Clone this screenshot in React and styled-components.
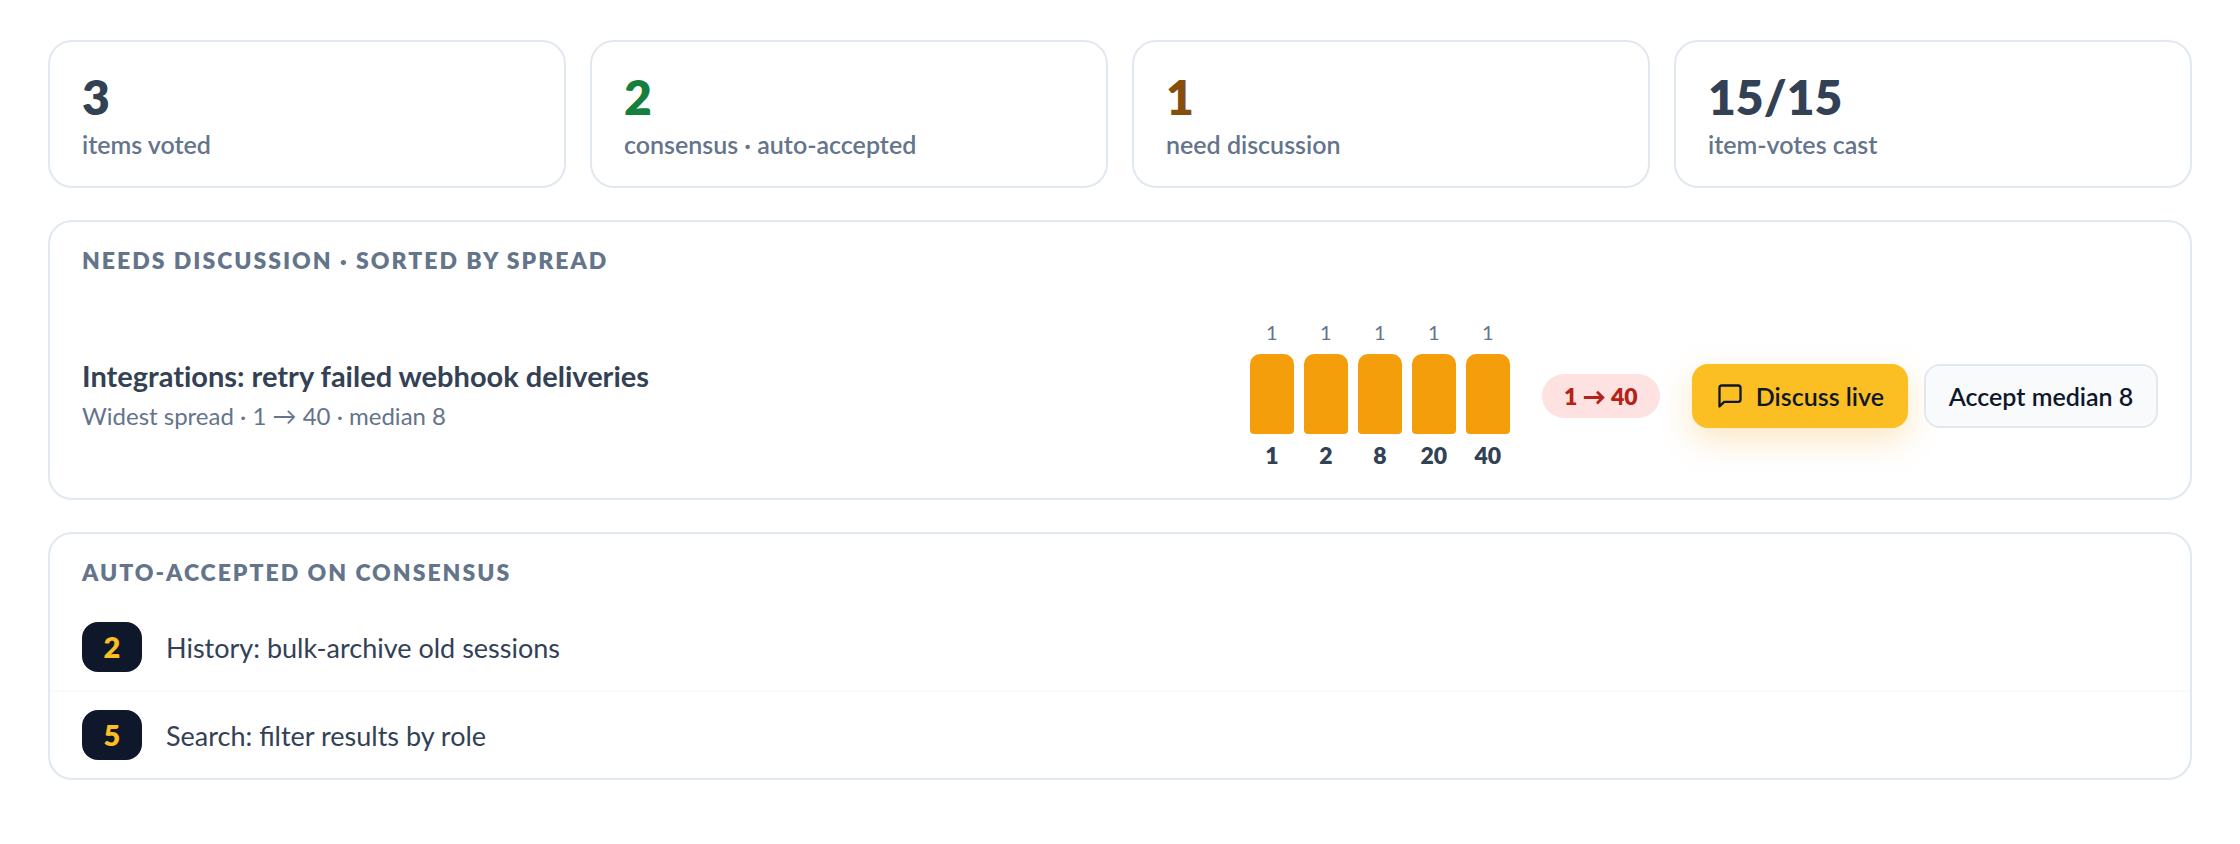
import styled, { createGlobalStyle } from "styled-components"

const stats = [
    { value: "3", label: "items voted", color: "#334155" },
    { value: "2", label: "consensus · auto-accepted", color: "#15803d" },
    { value: "1", label: "need discussion", color: "#854d0e" },
    { value: "15/15", label: "item-votes cast", color: "#334155" },
]

const votes = [
    { estimate: 1, count: 1 },
    { estimate: 2, count: 1 },
    { estimate: 8, count: 1 },
    { estimate: 20, count: 1 },
    { estimate: 40, count: 1 },
]

const accepted = [
    { estimate: 2, title: "History: bulk-archive old sessions" },
    { estimate: 5, title: "Search: filter results by role" },
]

const maxCount = Math.max(...votes.map((vote) => vote.count))

export default function App() {
    return (
        <>
            <GlobalStyle />
            <PageContainer>
                <StatGrid>
                    {stats.map((stat) => (
                        <StatCard key={stat.label}>
                            <StatValue $color={stat.color}>{stat.value}</StatValue>
                            <StatLabel>{stat.label}</StatLabel>
                        </StatCard>
                    ))}
                </StatGrid>

                <Panel>
                    <PanelTitle>Needs discussion · sorted by spread</PanelTitle>
                    <DiscussionRow>
                        <ItemText>
                            <ItemTitle>Integrations: retry failed webhook deliveries</ItemTitle>
                            <ItemInfo>Widest spread · 1 → 40 · median 8</ItemInfo>
                        </ItemText>
                        <Chart>
                            {votes.map((vote) => (
                                <ChartColumn key={vote.estimate}>
                                    <VoteCount>{vote.count}</VoteCount>
                                    <Bar style={{ height: (vote.count / maxCount) * 80 }} />
                                    <Estimate>{vote.estimate}</Estimate>
                                </ChartColumn>
                            ))}
                        </Chart>
                        <SpreadPill>1 → 40</SpreadPill>
                        <Actions>
                            <DiscussButton type="button">
                                <ChatIcon />
                                Discuss live
                            </DiscussButton>
                            <AcceptButton type="button">Accept median 8</AcceptButton>
                        </Actions>
                    </DiscussionRow>
                </Panel>

                <Panel>
                    <PanelTitle>Auto-accepted on consensus</PanelTitle>
                    <AcceptedList>
                        {accepted.map((item) => (
                            <AcceptedRow key={item.title}>
                                <EstimateBadge>{item.estimate}</EstimateBadge>
                                {item.title}
                            </AcceptedRow>
                        ))}
                    </AcceptedList>
                </Panel>
            </PageContainer>
        </>
    )
}

function ChatIcon() {
    return (
        <svg
            width="28"
            height="28"
            viewBox="0 0 24 24"
            fill="none"
            stroke="currentColor"
            strokeWidth="2"
            strokeLinecap="round"
            strokeLinejoin="round"
            aria-hidden="true"
        >
            <path d="M21 15a2 2 0 0 1-2 2H7l-4 4V5a2 2 0 0 1 2-2h14a2 2 0 0 1 2 2z" />
        </svg>
    )
}

const GlobalStyle = createGlobalStyle`
    * {
        box-sizing: border-box;
    }

    body {
        margin: 0;
        background-color: #FFFFFF;
        color: #334155;
        font-family: Lato, "Noto Sans", sans-serif;
        font-size: 25px;
    }
`

const PageContainer = styled.main`
    display: flex;
    flex-direction: column;
    gap: 32px;
    padding: 40px 48px;
`

const StatGrid = styled.section`
    display: grid;
    grid-template-columns: repeat(4, 1fr);
    gap: 24px;
    @media screen and (max-width: 1100px) {
        grid-template-columns: repeat(2, 1fr);
    }
`

const StatCard = styled.div`
    padding: 26px 32px 24px;
    border: 2px solid #e2e8f0;
    border-radius: 24px;
`

const StatValue = styled.div`
    color: ${(props) => props.$color};
    font-size: 48px;
    font-weight: 800;
    line-height: 58px;
`

const StatLabel = styled.div`
    color: #64748b;
    font-weight: 600;
    line-height: 36px;
`

const Panel = styled.section`
    border: 2px solid #e2e8f0;
    border-radius: 24px;
    overflow: hidden;
`

const PanelTitle = styled.h2`
    margin: 0;
    padding: 24px 32px 18px;
    color: #64748b;
    font-size: 23px;
    font-weight: 800;
    line-height: 28px;
    letter-spacing: 2px;
    text-transform: uppercase;
`

const DiscussionRow = styled.div`
    display: flex;
    align-items: center;
    gap: 32px;
    padding: 28px 32px 26px;
    @media screen and (max-width: 1400px) {
        flex-wrap: wrap;
    }
`

const ItemText = styled.div`
    flex: 1;
`

const ItemTitle = styled.h3`
    margin: 0 0 4px;
    font-size: 29px;
    font-weight: 700;
    font-variant-ligatures: none;
    line-height: 36px;
`

const ItemInfo = styled.p`
    margin: 0;
    color: #64748b;
    font-size: 24px;
    line-height: 36px;
`

const Chart = styled.div`
    display: flex;
    align-items: flex-end;
    gap: 10px;
`

const ChartColumn = styled.div`
    width: 44px;
    text-align: center;
`

const VoteCount = styled.div`
    color: #64748b;
    font-size: 20px;
    line-height: 24px;
`

const Bar = styled.div`
    margin: 10px 0 4px;
    border-radius: 10px 10px 4px 4px;
    background-color: #f59e0b;
`

const Estimate = styled.div`
    font-size: 23px;
    font-weight: 800;
    line-height: 34px;
`

const SpreadPill = styled.span`
    min-width: 118px;
    padding: 0 16px;
    border-radius: 22px;
    background-color: #fee2e2;
    color: #b42318;
    font-size: 23px;
    font-weight: 800;
    line-height: 44px;
    text-align: center;
`

const Actions = styled.div`
    display: flex;
    gap: 16px;
`

const Button = styled.button`
    display: flex;
    align-items: center;
    justify-content: center;
    gap: 12px;
    height: 64px;
    padding: 0 22px;
    border: 2px solid;
    border-radius: 16px;
    color: #0f172a;
    font-family: inherit;
    font-size: 25px;
    font-weight: 600;
    cursor: pointer;
`

const DiscussButton = styled(Button)`
    min-width: 216px;
    border-color: #fbbf24;
    background-color: #fbbf24;
    box-shadow: 0 12px 32px rgba(245, 158, 11, 0.25);
`

const AcceptButton = styled(Button)`
    min-width: 234px;
    border-color: #e2e8f0;
    background-color: #f8fafc;
`

const AcceptedList = styled.ul`
    margin: 0;
    padding: 0;
    list-style: none;
`

const AcceptedRow = styled.li`
    display: flex;
    align-items: center;
    gap: 24px;
    padding: 18px 32px;
    font-size: 27px;
    & + & {
        border-top: 2px solid #f8fafc;
    }
`

const EstimateBadge = styled.span`
    width: 60px;
    border-radius: 16px;
    background-color: #0f172a;
    color: #fbbf24;
    font-size: 29px;
    font-weight: 800;
    line-height: 50px;
    text-align: center;
`
